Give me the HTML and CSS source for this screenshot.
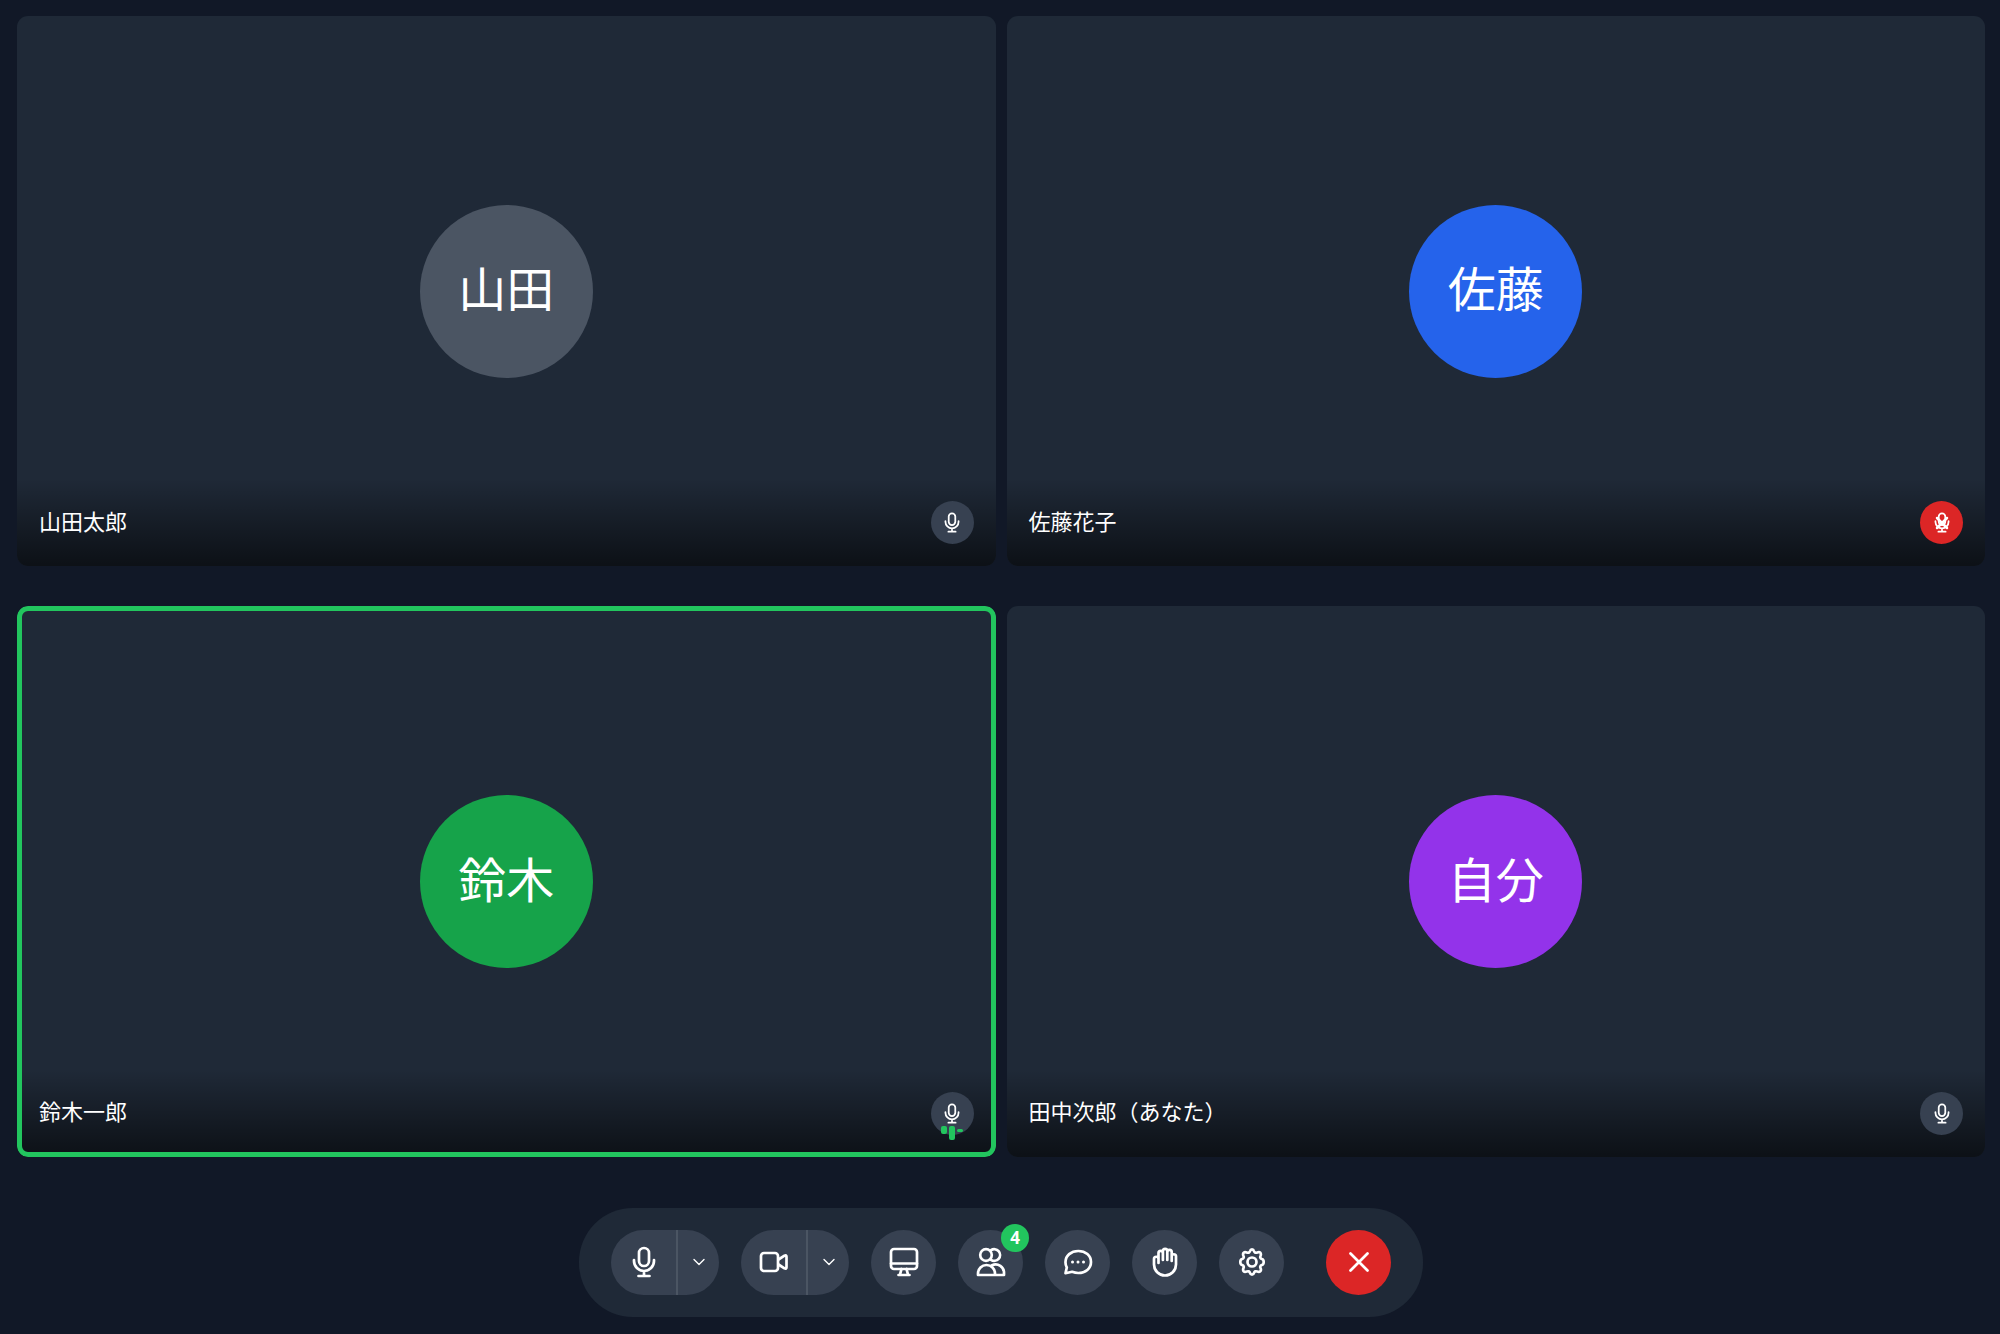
FILE: index.html
```html
<!DOCTYPE html>
<html lang="ja">
<head>
    <meta charset="UTF-8">
    <meta name="viewport" content="width=device-width, initial-scale=1.0">
    <title>ビデオ会議</title>
    <link rel="stylesheet" href="styles.css">
</head>
<body>
    <!-- shared icon shapes -->
    <svg class="sprite" aria-hidden="true">
        <symbol id="icon-mic" viewBox="0 0 24 32">
            <rect x="7" y="2" width="10" height="18" rx="5"/>
            <path d="M2 14v1a10 10 0 0 0 20 0v-1M12 25v5M6.5 30h11"/>
        </symbol>
        <symbol id="icon-chevron" viewBox="0 0 12 8">
            <path d="M1 1.5l5 5 5-5"/>
        </symbol>
    </svg>

    <div class="container">
        <main class="video-grid">
            <section class="tile">
                <div class="avatar gray">山田</div>
                <div class="tile-footer">
                    <span class="name">山田太郎</span>
                    <span class="mic-status">
                        <svg class="mic-small"><use href="#icon-mic"/></svg>
                    </span>
                </div>
            </section>

            <section class="tile">
                <div class="avatar blue">佐藤</div>
                <div class="tile-footer">
                    <span class="name">佐藤花子</span>
                    <span class="mic-status muted">
                        <svg class="mic-small"><use href="#icon-mic"/></svg>
                        <svg class="mute-cross" viewBox="0 0 14 14"><path d="M2 2l10 10M12 2L2 12"/></svg>
                    </span>
                </div>
            </section>

            <section class="tile speaking">
                <div class="avatar green">鈴木</div>
                <div class="tile-footer">
                    <span class="name">鈴木一郎</span>
                    <span class="mic-status">
                        <svg class="mic-small"><use href="#icon-mic"/></svg>
                        <span class="levels"><i class="mid"></i><i class="high"></i><i class="low"></i></span>
                    </span>
                </div>
            </section>

            <section class="tile">
                <div class="avatar purple">自分</div>
                <div class="tile-footer">
                    <span class="name">田中次郎（あなた）</span>
                    <span class="mic-status">
                        <svg class="mic-small"><use href="#icon-mic"/></svg>
                    </span>
                </div>
            </section>
        </main>

        <footer class="controls">
            <div class="split">
                <button class="split-main" type="button" aria-label="マイク">
                    <svg class="mic-large"><use href="#icon-mic"/></svg>
                </button>
                <button class="split-menu" type="button" aria-label="マイクの選択">
                    <svg class="chevron"><use href="#icon-chevron"/></svg>
                </button>
            </div>
            <div class="split">
                <button class="split-main" type="button" aria-label="カメラ">
                    <svg class="icon" viewBox="0 0 30 30">
                        <rect x="2" y="6" width="17" height="18" rx="3"/>
                        <path d="M19.5 12.5l6-3.8q2-.9 2 1v10.6q0 1.9-2 1l-6-3.8"/>
                    </svg>
                </button>
                <button class="split-menu" type="button" aria-label="カメラの選択">
                    <svg class="chevron"><use href="#icon-chevron"/></svg>
                </button>
            </div>
            <button class="control" type="button" aria-label="画面共有">
                <svg class="icon" viewBox="0 0 30 30">
                    <rect x="2" y="2" width="26" height="20" rx="3"/>
                    <path d="M2 16.5h26M12.5 22l-1.5 5.5M17.5 22l1.5 5.5M9.5 28h11"/>
                </svg>
            </button>
            <button class="control" type="button" aria-label="参加者">
                <svg class="icon" viewBox="0 0 30 30">
                    <circle cx="10" cy="8" r="5.8"/>
                    <path d="M15 3.2a5.8 5.8 0 1 1 0 9.6"/>
                    <path d="M2 28v-1.5a8.5 8.5 0 0 1 17 0V28zM16 18.2A8.5 8.5 0 0 1 28 26.5V28h-9"/>
                </svg>
                <span class="badge">4</span>
            </button>
            <button class="control" type="button" aria-label="チャット">
                <svg class="icon" viewBox="0 0 30 30">
                    <path d="M2.5 26.2l1.3-5.7A10.5 10.5 0 0 1 2.5 15C2.5 8.600 8 4 15.300 4S28 8.600 28 15s-5.500 11-12.700 11c-2.200 0-4.300-.5-6.200-1.200z"/>
                    <path class="dots" d="M9.5 15h.01M15 15h.01M20.5 15h.01"/>
                </svg>
            </button>
            <button class="control" type="button" aria-label="挙手">
                <svg class="icon" viewBox="0 0 30 30">
                    <path d="M8.5 16V6a2.2 2.2 0 0 1 4.4 0V13M12.9 13V4a2.2 2.2 0 0 1 4.4 0V13M17.3 13V5a2.2 2.2 0 0 1 4.4 0V14M21.7 14V9a2.2 2.2 0 0 1 4.3 0v8.500a11 11 0 0 1-22 0V12a2.2 2.2 0 0 1 4.5 0v4"/>
                </svg>
            </button>
            <button class="control" type="button" aria-label="設定">
                <svg class="icon" viewBox="0 0 30 30">
                    <circle cx="15" cy="15" r="4.5"/>
                    <path d="M15 2.3q1.500 0 2 1.800.9 2.400 3.300 1.300 2-.8 3 .3t.3 3q-1.100 2.400 1.300 3.300 1.800.5 1.800 3t-1.800 3q-2.400.9-1.300 3.300.8 2-.3 3t-3 .3q-2.400-1.100-3.300 1.300-.5 1.800-2 1.800t-2-1.800q-.9-2.400-3.300-1.300-2 .8-3-.3t-.3-3q1.100-2.400-1.300-3.300-1.800-.5-1.800-3t1.800-3q2.400-.9 1.300-3.300-.8-2 .3-3t3-.3q2.400 1.100 3.300-1.300.5-1.800 2-1.800z"/>
                </svg>
            </button>
            <button class="control leave" type="button" aria-label="退出">
                <svg class="icon" viewBox="0 0 30 30"><path d="M6.5 6.5l17 17M23.5 6.5l-17 17"/></svg>
            </button>
        </footer>
    </div>
</body>
</html>
```
FILE: styles.css
```css
* {
    box-sizing: border-box;
}

body {
    margin: 0;
    background-color: #111827;
    color: white;
    font-family: "Liberation Sans", "Noto Sans CJK JP", sans-serif;
}

.sprite {
    position: absolute;
    width: 0;
    height: 0;
}

.container {
    display: flex;
    flex-direction: column;
    align-items: center;
    min-height: 100vh;
    padding: 16px 15px 16px 17px;
}

.video-grid {
    display: grid;
    grid-template-columns: 1fr 1fr;
    gap: 40px 11px;
    width: 100%;
}

.tile {
    position: relative;
    display: flex;
    align-items: center;
    justify-content: center;
    aspect-ratio: 16 / 9;
    background-color: #1f2937;
    border-radius: 11px;
    overflow: hidden;
}

/* ring drawn over the footer shade */
.speaking::after {
    content: "";
    position: absolute;
    inset: 0;
    border: 5px solid #22c55e;
    border-radius: 11px;
}

.avatar {
    display: flex;
    align-items: center;
    justify-content: center;
    width: 173px;
    height: 173px;
    border-radius: 50%;
    font-size: 48px;
    line-height: 64px;
}

.gray { background-color: #4b5563; }
.blue { background-color: #2563eb; }
.green { background-color: #16a34a; }
.purple { background-color: #9333ea; }

.tile-footer {
    position: absolute;
    left: 0;
    right: 0;
    bottom: 0;
    display: flex;
    align-items: center;
    justify-content: space-between;
    padding: 22px;
    background: linear-gradient(to top, rgba(0, 0, 0, 0.6), transparent);
}

.name {
    font-size: 22px;
    line-height: 32px;
}

.mic-status {
    position: relative;
    display: flex;
    align-items: center;
    justify-content: center;
    width: 43px;
    height: 43px;
    border-radius: 50%;
    background-color: #374151;
}

.mic-status.muted {
    background-color: #dc2626;
}

.levels {
    position: absolute;
    top: 34px;
    display: flex;
    gap: 2px;
    height: 14px;
}

.levels i {
    width: 6px;
    border-radius: 2px;
    background-color: #22c55e;
}

.levels .mid { height: 8px; }
.levels .high { height: 14px; }
.levels .low {
    height: 3px;
    margin-top: 3px;
}

svg {
    fill: none;
    stroke: white;
    stroke-width: 2.7;
    stroke-linecap: round;
    stroke-linejoin: round;
}

.mic-small {
    width: 16px;
    height: 21px;
}

.mute-cross {
    position: absolute;
    width: 14px;
    height: 14px;
    stroke-width: 2.5;
}

.mic-large {
    width: 24px;
    height: 32px;
}

.icon {
    width: 30px;
    height: 30px;
}

.dots {
    stroke-width: 3;
}

.chevron {
    width: 12px;
    height: 8px;
    stroke-width: 1.4;
}

.controls {
    display: flex;
    align-items: center;
    gap: 22px;
    margin-top: 51px;
    padding: 22px 32px;
    background-color: #1f2937;
    border-radius: 54px;
}

button {
    display: flex;
    align-items: center;
    justify-content: center;
    height: 65px;
    padding: 0;
    border: none;
    background-color: #374151;
    color: white;
    font-family: inherit;
    cursor: pointer;
}

button:hover {
    background-color: #4b5563;
}

.split {
    display: flex;
}

.split-main {
    width: 65px;
    border-radius: 33px 0 0 33px;
}

.split-menu {
    width: 43px;
    border-left: 2px solid #4b5563;
    border-radius: 0 33px 33px 0;
}

.control {
    position: relative;
    width: 65px;
    border-radius: 50%;
}

.leave {
    margin-left: 20px;
    background-color: #dc2626;
}

.leave:hover {
    background-color: #b91c1c;
}

.badge {
    position: absolute;
    top: -6px;
    right: -6px;
    width: 28px;
    height: 28px;
    border-radius: 50%;
    background-color: #22c55e;
    font-family: "Noto Sans", sans-serif;
    font-size: 17px;
    font-weight: bold;
    line-height: 28px;
    text-align: center;
}
```
